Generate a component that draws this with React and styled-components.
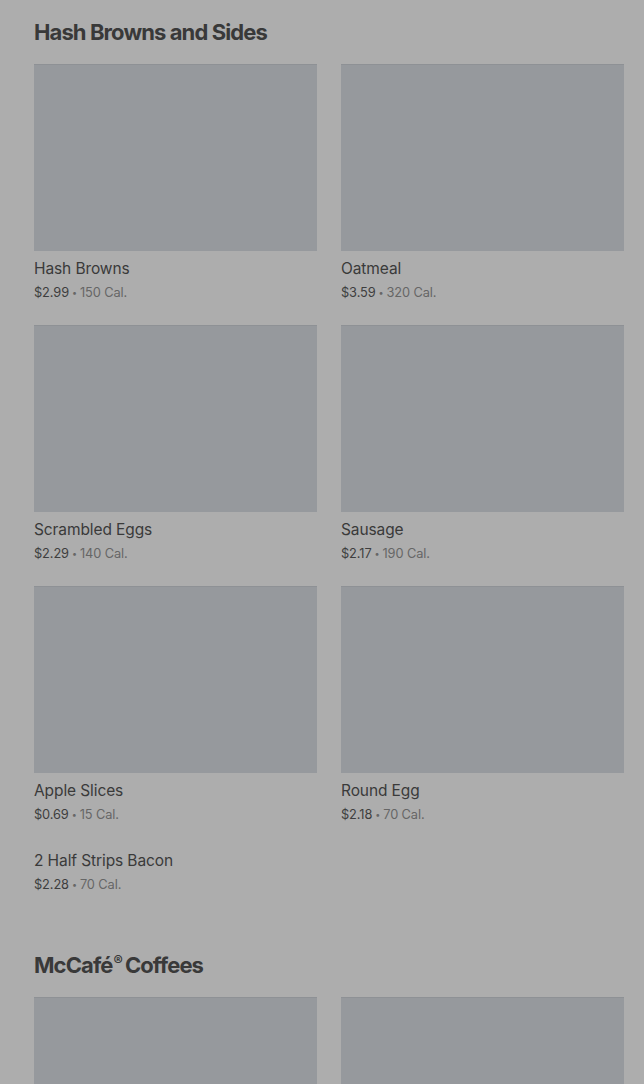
import React from 'react'
import styled, { createGlobalStyle } from 'styled-components'

const GlobalStyle = createGlobalStyle`
  html, body {
    margin: 0;
    padding: 0;
    background: #adadad;
    font-family: Inter, "Noto Sans", "Liberation Sans", sans-serif;
  }
`

const Page = styled.div`
  padding: 18px 20px 0 34px;
  background: #adadad;
  min-height: 1084px;
  box-sizing: border-box;
`

const Section = styled.section`
  margin-bottom: 56px;
`

const Heading = styled.h2`
  margin: 0 0 18px;
  font-size: 22px;
  line-height: 28px;
  font-weight: 700;
  letter-spacing: -0.9px;
  color: #393939;
`

const Reg = styled.sup`
  font-size: 14px;
  line-height: 0;
  vertical-align: 7px;
  margin: 0 3px 0 1px;
`

const Grid = styled.div`
  display: grid;
  grid-template-columns: 283px 283px;
  column-gap: 24px;
  row-gap: 22px;
`

const Card = styled.div`
  display: flex;
  flex-direction: column;
`

const Thumb = styled.div`
  height: 187px;
  background: #96999d;
  border-top: 1px solid #8e9195;
  box-sizing: border-box;
`

const Name = styled.div`
  margin-top: ${(p) => (p.$noImage ? '2px' : '6px')};
  font-size: 15.5px;
  line-height: 24px;
  color: #3a3a3a;
  letter-spacing: -0.1px;
`

const Meta = styled.div`
  margin-top: 2px;
  height: 20px;
  font-size: 12.8px;
  line-height: 20px;
  color: #666;
  letter-spacing: -0.1px;
`

const Price = styled.span`
  color: #3e3e3e;
`

const Dot = styled.span`
  display: inline-block;
  margin: 0 3px;
  font-size: 9px;
  line-height: 1;
  vertical-align: 1px;
  color: #666;
`

const sides = [
  { name: 'Hash Browns', price: '$2.99', cal: '150 Cal.' },
  { name: 'Oatmeal', price: '$3.59', cal: '320 Cal.' },
  { name: 'Scrambled Eggs', price: '$2.29', cal: '140 Cal.' },
  { name: 'Sausage', price: '$2.17', cal: '190 Cal.' },
  { name: 'Apple Slices', price: '$0.69', cal: '15 Cal.' },
  { name: 'Round Egg', price: '$2.18', cal: '70 Cal.' },
  { name: '2 Half Strips Bacon', price: '$2.28', cal: '70 Cal.', noImage: true },
]

const coffees = [{ name: '' }, { name: '' }]

function Item({ item }) {
  return (
    <Card>
      {!item.noImage && <Thumb />}
      {item.name && <Name $noImage={item.noImage}>{item.name}</Name>}
      {item.price && (
        <Meta>
          <Price>{item.price}</Price>
          <Dot>•</Dot>
          {item.cal}
        </Meta>
      )}
    </Card>
  )
}

export default function App() {
  return (
    <>
      <GlobalStyle />
      <Page>
        <Section>
          <Heading>Hash Browns and Sides</Heading>
          <Grid>
            {sides.map((s) => (
              <Item key={s.name} item={s} />
            ))}
          </Grid>
        </Section>
        <Section>
          <Heading>
            McCafé<Reg>®</Reg>Coffees
          </Heading>
          <Grid>
            {coffees.map((c, i) => (
              <Item key={i} item={c} />
            ))}
          </Grid>
        </Section>
      </Page>
    </>
  )
}
